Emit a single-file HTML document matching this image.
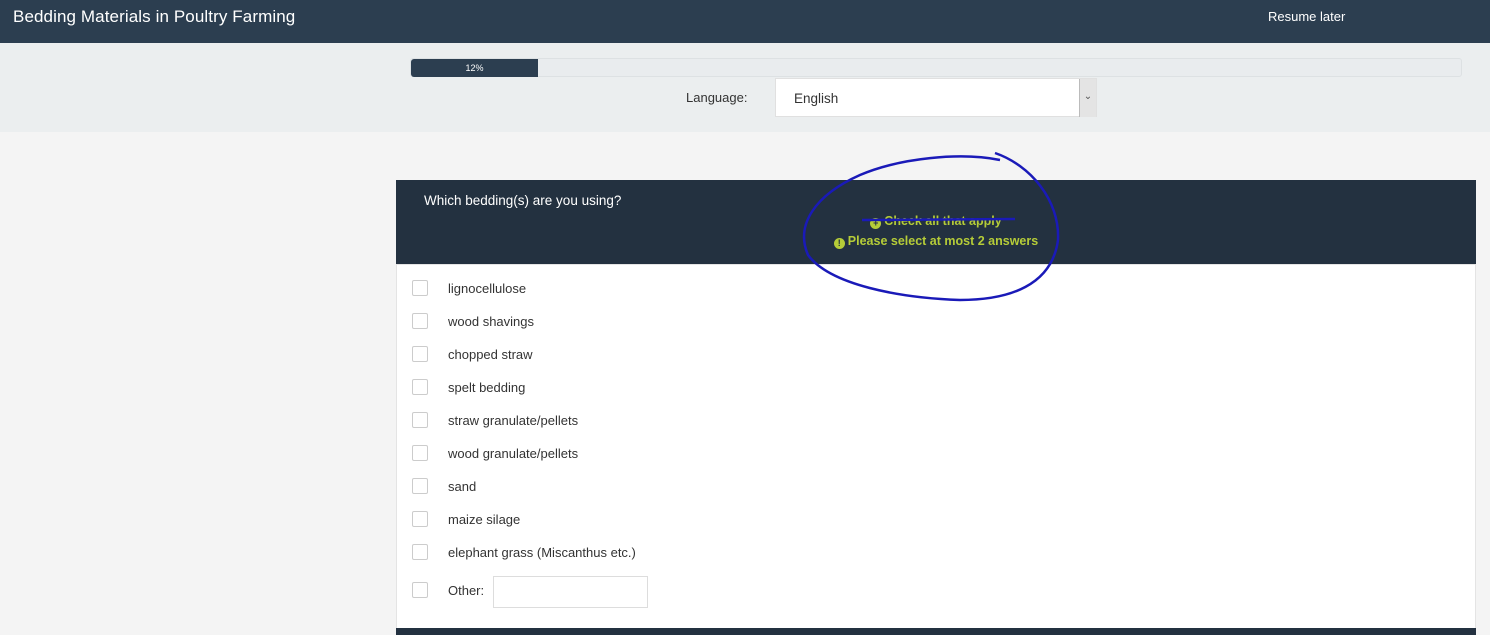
<!DOCTYPE html>
<html><head><style>
*{box-sizing:border-box;margin:0;padding:0}
body{width:1490px;height:635px;overflow:hidden;background:#f4f4f4;font-family:"Liberation Sans",sans-serif;position:relative;color:#333}
.top{position:absolute;left:0;top:0;width:1490px;height:43px;background:#2c3e50;color:#fff}
.top .t{position:absolute;left:13px;top:7px;font-size:17px;letter-spacing:0.1px}
.top .r{position:absolute;left:1268px;top:9px;font-size:13px}
.band{position:absolute;left:0;top:43px;width:1490px;height:89px;background:#ebeeef}
.pb{position:absolute;left:410px;top:58px;width:1052px;height:19px;background:#e9ecee;border:1px solid #dde1e3;border-radius:3px}
.pb .f{position:absolute;left:0;top:0;width:127px;height:18px;background:#2c3e50;border-radius:3px 0 0 3px;color:#fff;font-size:9px;text-align:center;line-height:18px}
.lang{position:absolute;left:686px;top:90px;font-size:13px}
.sel{position:absolute;left:775px;top:78px;width:322px;height:39px;background:#fff;border:1px solid #e0e0e0;font-size:13.5px;padding:12px 18px}
.sel .a{position:absolute;right:0;top:0;width:17px;height:38px;background:#e4e4e4;border-left:1px solid #bbb;font-size:10px;text-align:center;line-height:36px;color:#555}
.qh{position:absolute;left:396px;top:180px;width:1080px;height:84px;background:#233140;color:#fff}
.qh .q{position:absolute;left:28px;top:13px;font-size:13.5px}
.qh .h{position:absolute;left:0;width:1080px;text-align:center;color:#b5cc38;font-size:12.5px;font-weight:bold}
.ic{display:inline-block;width:11px;height:11px;border-radius:50%;background:#b5cc38;color:#233140;font-size:9px;line-height:11px;text-align:center;vertical-align:-1px;margin-right:3px}
.body{position:absolute;left:396px;top:264px;width:1080px;height:371px;background:#fff;border:1px solid #e4e4e4}
.it{position:absolute;left:15px;font-size:13px;color:#333}
.cb{display:inline-block;width:16px;height:16px;border:1px solid #ccc;border-radius:2px;vertical-align:middle;margin-right:20px;background:#fff;margin-top:-3px}
.bot{position:absolute;left:396px;top:628px;width:1080px;height:7px;background:#233140}
</style></head><body>
<div class="top"><div class="t">Bedding Materials in Poultry Farming</div><div class="r">Resume later</div></div>
<div class="band"></div>
<div class="pb"><div class="f">12%</div></div>
<div class="lang">Language:</div>
<div class="sel">English<div class="a">&#8964;</div></div>
<div class="qh"><div class="q">Which bedding(s) are you using?</div>
<div class="h" style="top:34px"><span class="ic">+</span>Check all that apply</div>
<div class="h" style="top:54px"><span class="ic">!</span>Please select at most 2 answers</div></div>
<div class="body">
<div class="it" style="top:16px"><span class="cb"></span>lignocellulose</div>
<div class="it" style="top:49px"><span class="cb"></span>wood shavings</div>
<div class="it" style="top:82px"><span class="cb"></span>chopped straw</div>
<div class="it" style="top:115px"><span class="cb"></span>spelt bedding</div>
<div class="it" style="top:148px"><span class="cb"></span>straw granulate/pellets</div>
<div class="it" style="top:181px"><span class="cb"></span>wood granulate/pellets</div>
<div class="it" style="top:214px"><span class="cb"></span>sand</div>
<div class="it" style="top:247px"><span class="cb"></span>maize silage</div>
<div class="it" style="top:280px"><span class="cb"></span>elephant grass (Miscanthus etc.)</div>
<div class="it" style="top:318px"><span class="cb"></span>Other:</div>
<div style="position:absolute;left:96px;top:311px;width:155px;height:32px;border:1px solid #ddd"></div>
</div>
<div class="bot"></div>
<svg style="position:absolute;left:0;top:0" width="1490" height="635"><path d="M995 153 C1030 165 1060 200 1058 240 C1052 285 1010 300 960 300 C900 298 830 285 808 255 C795 225 815 195 860 175 C900 158 960 152 1000 160 M862 220 L1015 219" fill="none" stroke="#1a1ab8" stroke-width="2.5"/></svg>
</body></html>
